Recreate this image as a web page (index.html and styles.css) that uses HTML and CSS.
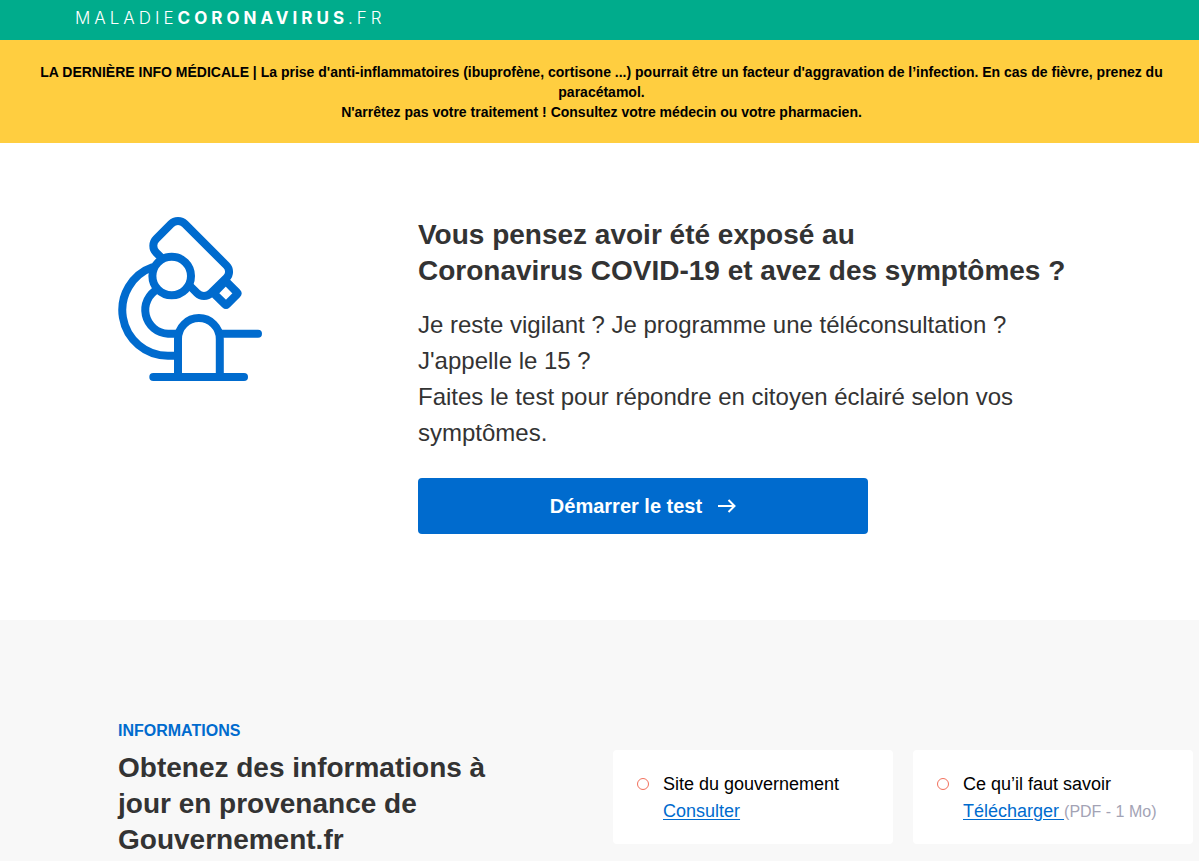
FILE: index.html
```html
<!DOCTYPE html>
<html lang="fr">
  <head>
    <meta charset="UTF-8" />
    <meta name="viewport" content="width=device-width, initial-scale=1.0" />
    <title>Maladie Coronavirus</title>
    <link rel="stylesheet" href="styles.css">
  </head>
  <body>
    <header class="header">
      <a class="logo" href="#">MALADIE<strong>CORONAVIRUS</strong>.FR</a>
    </header>

    <div class="alert">
      <p>
        LA DERNIÈRE INFO MÉDICALE | La prise d'anti-inflammatoires (ibuprofène, cortisone ...) pourrait être un facteur d'aggravation de l’infection. En cas de fièvre, prenez du paracétamol.<br>
        N'arrêtez pas votre traitement ! Consultez votre médecin ou votre pharmacien.
      </p>
    </div>

    <main>
      <section class="hero">
        <svg class="hero-icon" width="144" height="164" viewBox="0 0 144 164" fill="none" stroke="currentColor" stroke-width="8" stroke-linecap="round" stroke-linejoin="round" aria-hidden="true">
          <path stroke-linecap="butt" d="M44 41.4 L38.2 35.6 A9.7 9.7 0 0 1 38.2 21.8 L53.1 6.9 A9.7 9.7 0 0 1 66.9 6.9 L108.5 48.5 A8.8 8.8 0 0 1 108.5 60.9 L92.9 76.1 A9.7 9.7 0 0 1 79.1 76.1 L70 67" />
          <path d="M107.7 64 L119 75.3 Q120 76.3 119 77.3 L109 87.3 Q108 88.3 107 87.3 L95.7 76.3 Z" />
          <circle cx="53.7" cy="59" r="19.3" />
          <path stroke-linecap="butt" d="M35 50 A45.6 45.6 0 0 0 50 138.7 H60" />
          <path stroke-linecap="butt" d="M40 72 A23.7 23.7 0 0 0 50 116.7 H60" />
          <path d="M60 160 V122 A20.9 20.9 0 0 1 101.8 122 V160" />
          <path d="M103 116.7 H140" />
          <path d="M35.3 160 H126" />
        </svg>

        <div class="hero-content">
          <h1>Vous pensez avoir été exposé au<br>Coronavirus COVID-19 et avez des symptômes ?</h1>
          <p>
            Je reste vigilant ? Je programme une téléconsultation ? J'appelle le 15 ?<br>
            Faites le test pour répondre en citoyen éclairé selon vos symptômes.
          </p>
          <button class="start-button" type="button">
            Démarrer le test
            <svg width="18" height="14" viewBox="0 0 18 14" fill="none" stroke="currentColor" stroke-width="2" aria-hidden="true">
              <path d="M0 7 H16.5 M10.5 1 L16.5 7 L10.5 13" />
            </svg>
          </button>
        </div>
      </section>

      <section class="informations">
        <div class="informations-title">
          <span class="label">INFORMATIONS</span>
          <h2>Obtenez des informations à jour en provenance de Gouvernement.fr</h2>
        </div>

        <ul class="cards">
          <li class="card">
            <span class="bullet"></span>
            <div>
              Site du gouvernement<br>
              <a href="#">Consulter</a>
            </div>
          </li>
          <li class="card">
            <span class="bullet"></span>
            <div>
              Ce qu’il faut savoir<br>
              <a href="#">Télécharger&nbsp;</a><small>(PDF - 1 Mo)</small>
            </div>
          </li>
        </ul>
      </section>
    </main>
  </body>
</html>
```
FILE: styles.css
```css
* {
  box-sizing: border-box;
}

body {
  display: flex;
  flex-direction: column;
  min-height: 100vh;
  margin: 0;
  font-family: "Liberation Sans", Arial, sans-serif;
  color: #333;
  background-color: #fff;
}

h1,
h2,
p,
ul {
  margin: 0;
  padding: 0;
}

main {
  display: flex;
  flex: 1;
  flex-direction: column;
}

.header {
  display: flex;
  align-items: center;
  padding: 8px 75px 12px;
  background-color: #00ac8c;
}

.logo {
  font-family: Inter, sans-serif;
  font-size: 17px;
  font-weight: 300;
  line-height: 20px;
  letter-spacing: 4px;
  color: #fff;
  text-decoration: none;
}

.logo strong {
  font-weight: 700;
}

.alert {
  padding: 22px 4px 21px 8px;
  background-color: #ffce40;
  color: #000;
  font-size: 14px;
  font-weight: bold;
  line-height: 20px;
  text-align: center;
}

.hero {
  display: flex;
  gap: 156px;
  padding: 74px 118px 86px;
}

.hero-icon {
  flex-shrink: 0;
  color: #006bce;
}

.hero-content {
  max-width: 663px;
}

h1,
h2 {
  font-size: 28px;
  font-weight: bold;
  line-height: 36px;
}

.hero-content p {
  margin-top: 18px;
  font-size: 24px;
  line-height: 36px;
}

.start-button {
  display: flex;
  align-items: center;
  justify-content: center;
  gap: 16px;
  width: 100%;
  max-width: 450px;
  height: 56px;
  margin-top: 27px;
  border: none;
  border-radius: 4px;
  background-color: #006bce;
  color: #fff;
  font-family: inherit;
  font-size: 20px;
  font-weight: bold;
  cursor: pointer;
}

.informations {
  display: flex;
  flex: 1;
  align-items: flex-start;
  padding: 101px 6px 0 118px;
  background-color: #f8f8f8;
}

.informations-title {
  flex: 1;
  padding-right: 120px;
}

.label {
  display: block;
  margin-bottom: 9px;
  color: #006bce;
  font-size: 16px;
  font-weight: bold;
  line-height: 20px;
}

.cards {
  display: flex;
  gap: 20px;
  margin-top: 29px;
  list-style: none;
}

.card {
  display: flex;
  gap: 14px;
  width: 280px;
  padding: 21px 24px 19px;
  border-radius: 4px;
  background-color: #fff;
  color: #000;
  font-size: 18px;
  line-height: 27px;
}

.card a {
  color: #006bce;
  text-underline-offset: 2px;
}

.card small {
  color: #a3a3b5;
  font-size: 16px;
}

.bullet {
  flex-shrink: 0;
  width: 12px;
  height: 12px;
  margin-top: 7px;
  border: 1px solid #f2705c;
  border-radius: 50%;
}
```
